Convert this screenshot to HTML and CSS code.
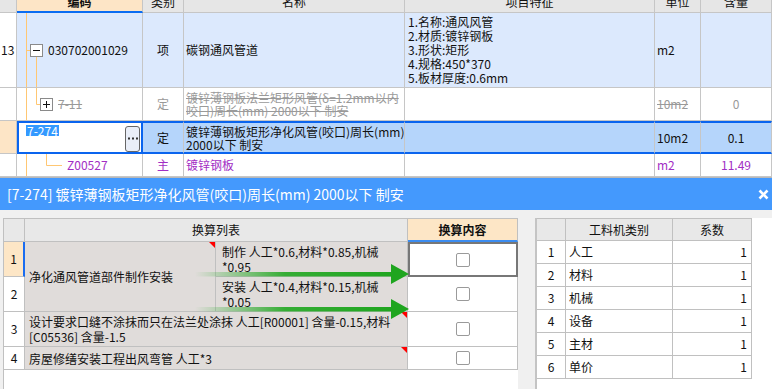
FILE: index.html
```html
<!DOCTYPE html>
<html lang="zh-CN">
<head>
    <meta charset="UTF-8">
    <title>换算</title>
    <link rel="stylesheet" href="styles.css">
</head>
<body>
    <div class="sheet">
        <div class="hd"></div>
        <div class="hd hd-code">编码</div>
        <div class="hd">类别</div>
        <div class="hd">名称</div>
        <div class="hd">项目特征</div>
        <div class="hd">单位</div>
        <div class="hd">含量</div>

        <div class="num">13</div>
        <div class="r13 code">
            <svg class="tree" width="126" height="74">
                <line x1="9.5" y1="0" x2="9.5" y2="74" />
                <line x1="9.5" y1="37.5" x2="13" y2="37.5" />
                <line x1="19.5" y1="44" x2="19.5" y2="74" />
                <rect class="box" x="13.5" y="31.5" width="12" height="12" />
                <line class="sign" x1="16" y1="37.5" x2="23" y2="37.5" />
            </svg>
            <span class="code-text" style="padding-left:31px">030702001029</span>
        </div>
        <div class="r13 mid">项</div>
        <div class="r13 txt">碳钢通风管道</div>
        <div class="r13 txt">
            <div class="feature">1.名称:通风风管<br>2.材质:镀锌钢板<br>3.形状:矩形<br>4.规格:450*370<br>5.板材厚度:0.6mm</div>
        </div>
        <div class="r13 txt">m2</div>
        <div class="r13"></div>

        <div class="num"></div>
        <div class="code del">
            <svg class="tree" width="126" height="32">
                <line x1="9.5" y1="0" x2="9.5" y2="32" />
                <line x1="19.5" y1="0" x2="19.5" y2="16.5" />
                <line x1="19.5" y1="16.5" x2="23" y2="16.5" />
                <rect class="box" x="23.5" y="10.5" width="12" height="12" />
                <line class="sign" x1="26" y1="16.5" x2="33" y2="16.5" />
                <line class="sign" x1="29.5" y1="13" x2="29.5" y2="20" />
            </svg>
            <span class="code-text" style="padding-left:41px">7-11</span>
        </div>
        <div class="mid grey">定</div>
        <div class="txt del two">镀锌薄钢板法兰矩形风管(δ=1.2mm以内<br>咬口)周长(mm) 2000以下 制安</div>
        <div></div>
        <div class="txt del">10m2</div>
        <div class="mid grey">0</div>

        <div class="num num-on"></div>
        <div class="edit">
            <span class="hl">7-274</span>
            <span class="dots">
                <svg width="10" height="3" viewBox="0 0 10 3">
                    <rect x="0" y="0.5" width="2" height="2" />
                    <rect x="4" y="0.5" width="2" height="2" />
                    <rect x="8" y="0.5" width="2" height="2" />
                </svg>
            </span>
        </div>
        <div class="sel mid">定</div>
        <div class="sel txt two">镀锌薄钢板矩形净化风管(咬口)周长(mm)<br>2000以下 制安</div>
        <div class="sel"></div>
        <div class="sel txt">10m2</div>
        <div class="sel mid">0.1</div>

        <div class="num"></div>
        <div class="code main">
            <svg class="tree" width="126" height="22">
                <line x1="9.5" y1="0" x2="9.5" y2="22" />
                <line x1="29.5" y1="0" x2="29.5" y2="11.5" />
                <line x1="29.5" y1="11.5" x2="45" y2="11.5" />
            </svg>
            <span class="code-text" style="padding-left:50px">Z00527</span>
        </div>
        <div class="mid main">主</div>
        <div class="txt main">镀锌钢板</div>
        <div></div>
        <div class="txt main">m2</div>
        <div class="mid main">11.49</div>
    </div>
    <div class="shade"></div>

    <div class="title">
        <span>[7-274] 镀锌薄钢板矩形净化风管(咬口)周长(mm) 2000以下 制安</span>
        <svg class="close" width="11" height="11" viewBox="0 0 11 11">
            <line x1="1.5" y1="1.5" x2="9.5" y2="9.5" />
            <line x1="9.5" y1="1.5" x2="1.5" y2="9.5" />
        </svg>
    </div>

    <div class="panel">
        <div class="calc">
            <div class="calc-grid">
                <div class="k-hd"></div>
                <div class="k-hd k-span">换算列表</div>
                <div class="k-hd k-hd-on">换算内容</div>

                <div class="k-num k-num-on">1</div>
                <div class="k-name k-merge flag">净化通风管道部件制作安装</div>
                <div class="k-name k-sub">制作 人工*0.6,材料*0.85,机械<br>*0.95</div>
                <div class="k-chk k-focus"><span class="chk"></span></div>

                <div class="k-num">2</div>
                <div class="k-name k-sub">安装 人工*0.4,材料*0.15,机械<br>*0.05</div>
                <div class="k-chk"><span class="chk"></span></div>

                <div class="k-num">3</div>
                <div class="k-name k-span flag">设计要求口缝不涂抹而只在法兰处涂抹 人工[R00001] 含量-0.15,材料<br>[C05536] 含量-1.5</div>
                <div class="k-chk"><span class="chk"></span></div>

                <div class="k-num">4</div>
                <div class="k-name k-span flag">房屋修缮安装工程出风弯管 人工*3</div>
                <div class="k-chk"><span class="chk"></span></div>
            </div>
        </div>

        <div class="factor">
            <div class="factor-grid">
                <div class="f-hd"></div>
                <div class="f-hd">工料机类别</div>
                <div class="f-hd">系数</div>
                <div class="f-num">1</div><div class="f-name">人工</div><div class="f-val">1</div>
                <div class="f-num">2</div><div class="f-name">材料</div><div class="f-val">1</div>
                <div class="f-num">3</div><div class="f-name">机械</div><div class="f-val">1</div>
                <div class="f-num">4</div><div class="f-name">设备</div><div class="f-val">1</div>
                <div class="f-num">5</div><div class="f-name">主材</div><div class="f-val">1</div>
                <div class="f-num">6</div><div class="f-name">单价</div><div class="f-val">1</div>
            </div>
        </div>

        <svg class="arrows" width="772" height="179">
            <defs>
                <linearGradient id="fade" x1="195" y1="0" x2="395" y2="0" gradientUnits="userSpaceOnUse">
                    <stop offset="0" stop-color="#22a822" stop-opacity="0" />
                    <stop offset="0.45" stop-color="#22a822" stop-opacity="0.9" />
                    <stop offset="1" stop-color="#1fa51f" />
                </linearGradient>
            </defs>
            <rect x="195" y="62" width="197" height="4.5" fill="url(#fade)" />
            <polygon points="391,54 409,64 391,74" fill="#1fa51f" />
            <rect x="195" y="97" width="197" height="4.5" fill="url(#fade)" />
            <polygon points="391,89 409,99 391,109" fill="#1fa51f" />
        </svg>
    </div>
</body>
</html>
```

FILE: styles.css
```css
* {
    margin: 0;
    padding: 0;
    box-sizing: border-box;
}

body {
    width: 772px;
    height: 389px;
    overflow: hidden;
    font-family: "Noto Sans CJK SC", sans-serif;
    font-size: 12px;
    line-height: 14px;
    color: #111;
    background: #fff;
}

/* top sheet */
.sheet {
    display: grid;
    grid-template-columns: 17px 126px 41px 221px 250px 46px 71px;
    grid-template-rows: 13px 75px 33px 33px 23px;
}

.sheet > div {
    position: relative;
    display: flex;
    align-items: center;
    overflow: hidden;
    white-space: nowrap;
    border-right: 1px solid #c6c6c6;
    border-bottom: 1px solid #c6c6c6;
}

.hd {
    justify-content: center;
    align-items: flex-start !important;
    line-height: 4px;
    background: #e6e6e6;
}

.hd-code {
    font-weight: bold;
    background: #fde5c6;
    border-bottom: 2px solid #0a6cf2 !important;
}

.num {
    padding-left: 1px;
    background: #fff;
}

.num-on {
    background: #fde5c6;
}

.r13 {
    background: #dce9fd;
}

.mid {
    justify-content: center;
}

.txt {
    padding-left: 2px;
}

.two {
    line-height: 13px;
}

.feature {
    padding-left: 1px;
    line-height: 14px;
}

.tree {
    position: absolute;
    left: 0;
    top: 0;
    stroke: #ffc773;
    stroke-width: 1;
}

.tree .box {
    fill: #fff;
    stroke: #8a8a8a;
}

.tree .sign {
    stroke: #111;
}

.code-text {
    position: relative;
}

.del {
    color: #9a9a9a;
    text-decoration: line-through;
}

.grey {
    color: #9a9a9a;
}

.main {
    color: #a22ec4;
}

.sel {
    background: #b5d5fb;
    border-top: 2px solid #0a64ee;
    border-bottom: 2px solid #0a64ee !important;
}

.edit {
    justify-content: space-between;
    align-items: flex-start !important;
    padding: 2px 1px 0 7px;
    background: #fff;
    border: 2px solid #0a64ee !important;
}

.hl {
    padding: 0 1px;
    line-height: 11px;
    color: #fff;
    background: #3399ff;
}

.dots {
    display: flex;
    align-items: center;
    justify-content: center;
    align-self: center;
    width: 15px;
    height: 26px;
    fill: #333;
    background: #e9eef8;
    border: 1px solid #666;
    border-radius: 3px;
}

.shade {
    height: 1px;
    background: #b9b9b9;
}

/* title bar */
.title {
    display: flex;
    align-items: center;
    justify-content: space-between;
    height: 32px;
    padding: 0 3px 0 7px;
    font-size: 14px;
    color: #fff;
    background: #4499fd;
}

.close {
    stroke: #fff;
    stroke-width: 2.6;
}

/* lower panel */
.panel {
    position: relative;
    display: flex;
    height: 179px;
    padding-top: 8px;
    background: #f0f0f0;
}

.calc {
    width: 515px;
    margin-left: 3px;
    background: #fff;
    border-left: 1px solid #c0c0c0;
    border-top: 1px solid #c0c0c0;
}

.calc-grid {
    display: grid;
    grid-template-columns: 21px 191px 192px 110px;
    grid-template-rows: 23px 35px 35px 35px 23px;
}

.calc-grid > div {
    position: relative;
    display: flex;
    align-items: center;
    white-space: nowrap;
    border-right: 1px solid #c0c0c0;
    border-bottom: 1px solid #c0c0c0;
}

.k-hd {
    justify-content: center;
    background: #e8e8e8;
}

.k-span {
    grid-column: span 2;
}

.k-hd-on {
    font-weight: bold;
    background: #fde6c6;
    border-bottom: 2px solid #3b8cf0 !important;
}

.k-num {
    justify-content: center;
    background: #fff;
}

.k-num-on {
    background: #fde6c6;
    border-right: 2px solid #1a6cf0 !important;
}

.k-name {
    padding-left: 4px;
    line-height: 15px;
    background: #e0dcda;
}

.k-merge {
    grid-row: span 2;
}

.k-sub {
    padding-left: 6px;
}

.k-chk {
    justify-content: center;
    background: #fff;
}

.k-focus {
    border: 2px solid #777 !important;
}

.chk {
    width: 14px;
    height: 14px;
    background: #fff;
    border: 1px solid #9a9a9a;
    border-radius: 2px;
}

.flag::after {
    content: "";
    position: absolute;
    top: 0;
    right: 0;
    border-top: 6px solid #f00;
    border-left: 6px solid transparent;
}

.factor {
    flex: 1;
    margin-left: 17px;
    background: #fff;
    border-left: 2px solid #c4c4c4;
}

.factor-grid {
    display: grid;
    grid-template-columns: 29px 107px 79px;
    grid-template-rows: 22px repeat(6, 23px);
    width: 215px;
    border-top: 1px solid #c0c0c0;
}

.factor-grid > div {
    display: flex;
    align-items: center;
    border-right: 1px solid #c0c0c0;
    border-bottom: 1px solid #c0c0c0;
}

.f-hd {
    justify-content: center;
    background: #e8e8e8;
}

.f-num {
    justify-content: center;
}

.f-name {
    padding-left: 3px;
}

.f-val {
    justify-content: flex-end;
    padding-right: 4px;
}

.arrows {
    position: absolute;
    left: 0;
    top: 0;
    pointer-events: none;
}
```
